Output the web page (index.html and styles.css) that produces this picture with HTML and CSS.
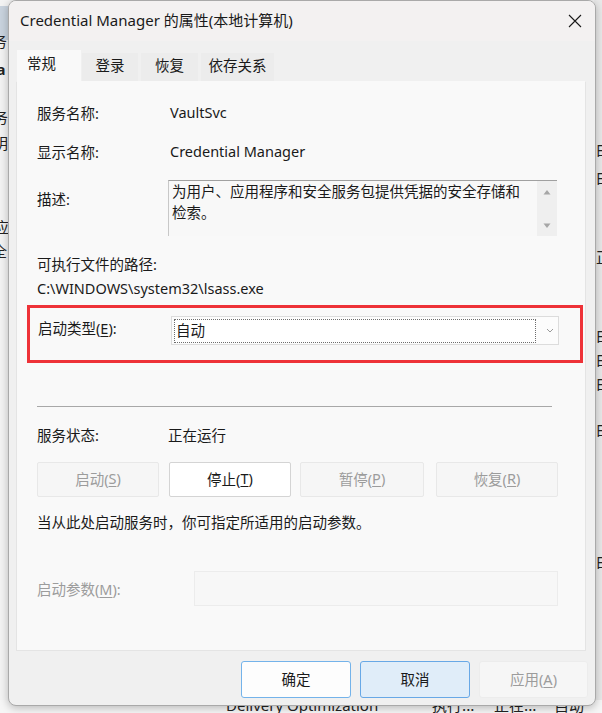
FILE: index.html
```html
<!DOCTYPE html>
<html lang="zh-CN">
<head>
<meta charset="utf-8">
<title>Credential Manager 的属性(本地计算机)</title>
<link rel="stylesheet" href="styles.css">
</head>
<body>
<div class="desktop">
  <div class="behind behind-left">
    <span class="frag f1">务</span>
    <span class="frag f2">ia</span>
    <span class="frag f3">务</span>
    <span class="frag f4">明</span>
    <span class="frag f5">应</span>
    <span class="frag f6">全</span>
  </div>
  <div class="behind behind-right">
    <span class="frag r1">由</span>
    <span class="frag r2">由</span>
    <span class="frag r3">正</span>
    <span class="frag r4">由</span>
    <span class="frag r5">由</span>
    <span class="frag r6">由</span>
    <span class="frag r7">由</span>
    <span class="frag r8">由</span>
  </div>
  <div class="behind behind-bottom">
    <span class="bfrag b1">Delivery Optimization</span>
    <span class="bfrag b2">执行...</span>
    <span class="bfrag b3">正在...</span>
    <span class="bfrag b4">自动(延</span>
  </div>

  <div class="dialog">
    <div class="titlebar">
      <span class="title">Credential Manager 的属性(本地计算机)</span>
      <svg class="close" width="14" height="14" viewBox="0 0 14 14"><path d="M1 1 L13 13 M13 1 L1 13" stroke="#1a1a1a" stroke-width="1.1" fill="none"/></svg>
    </div>
    <div class="tabs">
      <div class="tab active">常规</div>
      <div class="tab">登录</div>
      <div class="tab">恢复</div>
      <div class="tab">依存关系</div>
    </div>
    <div class="panel">
      <div class="row r-name"><span class="label">服务名称:</span><span class="value">VaultSvc</span></div>
      <div class="row r-display"><span class="label">显示名称:</span><span class="value">Credential Manager</span></div>
      <div class="row r-desc">
        <span class="label desc-label">描述:</span>
        <div class="descbox">
          <div class="desctext">为用户、应用程序和安全服务包提供凭据的安全存储和<br>检索。</div>
          <div class="vscroll">
            <svg width="8" height="6" viewBox="0 0 8 6"><path d="M4 1 L7.5 5.5 L0.5 5.5 Z" fill="#a6a6a6"/></svg>
            <svg width="8" height="6" viewBox="0 0 8 6"><path d="M0.5 0.5 L7.5 0.5 L4 5 Z" fill="#a6a6a6"/></svg>
          </div>
        </div>
      </div>
      <div class="line r-pathlabel">可执行文件的路径:</div>
      <div class="line r-path">C:\WINDOWS\system32\lsass.exe</div>
      <div class="highlight">
        <span class="label hlabel">启动类型(<u>E</u>):</span>
        <div class="combo">
          <div class="combo-field">自动</div>
          <svg class="chev" width="8" height="5" viewBox="0 0 8 5"><path d="M1 1 L4 4 L7 1" stroke="#9a9a9a" stroke-width="1" fill="none"/></svg>
        </div>
      </div>
      <div class="sep"></div>
      <div class="row r-status"><span class="label">服务状态:</span><span class="value status">正在运行</span></div>
      <div class="btnrow">
        <div class="btn disabled">启动(<u>S</u>)</div>
        <div class="btn">停止(<u>T</u>)</div>
        <div class="btn disabled">暂停(<u>P</u>)</div>
        <div class="btn disabled">恢复(<u>R</u>)</div>
      </div>
      <div class="line r-note">当从此处启动服务时，你可指定所适用的启动参数。</div>
      <div class="row r-params">
        <span class="label plabel">启动参数(<u>M</u>):</span>
        <div class="pinput"></div>
      </div>
    </div>
    <div class="footer">
      <div class="fbtn ok">确定</div>
      <div class="fbtn cancel">取消</div>
      <div class="fbtn apply">应用(<u>A</u>)</div>
    </div>
  </div>
</div>
</body>
</html>
```
FILE: styles.css
```css
* { box-sizing: border-box; }
html, body { margin: 0; padding: 0; }
body {
  width: 602px;
  height: 713px;
  overflow: hidden;
  font-family: "Noto Sans", "Noto Sans CJK SC", sans-serif;
  font-size: 14.5px;
  color: #1a1a1a;
  background: #f0f0f0;
}
.desktop { position: relative; width: 602px; height: 713px; overflow: hidden; }

.behind { position: absolute; font-family: "Noto Sans CJK SC", sans-serif; font-size: 15px; color: #222; }
.behind-left { left: 0; top: 0; width: 10px; height: 713px; background: #f3f3f3; }
.behind-left::before { content: ""; position: absolute; left: 0; top: 6px; width: 10px; height: 34px; background: #c9d3de; }
.behind-right { left: 594px; top: 0; width: 8px; height: 713px; background: #e9e9e9; }
.behind-bottom { left: 0; top: 700px; width: 602px; height: 13px; background: #f6f6f6; }
.frag { position: absolute; line-height: 18px; }
.f1 { left: -8px; top: 32px; }
.f2 { left: -8px; top: 60px; font-weight: bold; font-family: "Noto Sans", sans-serif; }
.f3 { left: -7px; top: 108px; }
.f4 { left: -7px; top: 134px; }
.f5 { left: -6px; top: 218px; }
.f6 { left: -8px; top: 242px; }
.r1 { left: 2px; top: 140px; }
.r2 { left: 2px; top: 168px; }
.r3 { left: 2px; top: 248px; }
.r4 { left: 2px; top: 326px; }
.r5 { left: 2px; top: 350px; }
.r6 { left: 2px; top: 374px; }
.r7 { left: 2px; top: 420px; }
.r8 { left: 2px; top: 552px; }
.bfrag { position: absolute; top: -4px; line-height: 18px; font-size: 15px; }
.b1 { left: 226px; font-family: "Noto Sans", sans-serif; }
.b2 { left: 432px; }
.b3 { left: 494px; }
.b4 { left: 554px; }

.dialog {
  position: absolute;
  left: 8px;
  top: 0;
  width: 588px;
  height: 706px;
  background: #f0f0f0;
  border: 1px solid #a9a9a9;
  border-radius: 8px;
  box-shadow: 0 2px 8px rgba(0,0,0,0.25);
  overflow: hidden;
  display: flex;
  flex-direction: column;
}
.titlebar {
  height: 40px;
  flex: none;
  background: #f3f1f1;
  display: flex;
  align-items: center;
  justify-content: space-between;
  padding: 0 13px 0 11px;
}
.title { font-size: 15px; color: #1a1a1a; margin-top: -4px; }
.close { margin-top: 0; }

.tabs {
  flex: none;
  height: 40px;
  display: flex;
  align-items: flex-end;
  padding-left: 8px;
  gap: 1px;
}
.tab {
  height: 28px;
  padding: 0 5px 5px;
  background: #ececec;
  display: flex;
  align-items: center;
  justify-content: center;
  font-size: 14.5px;
  color: #1a1a1a;
}
.tab:nth-child(2) { width: 56px; margin-left: 0; }
.tab:nth-child(3) { width: 57px; margin-left: 2px; }
.tab:nth-child(4) { width: 73px; margin-left: 2px; }
.tab.active {
  width: 64px;
  height: 31px;
  background: #f9f9f9;
  padding-bottom: 6px;
  justify-content: flex-start;
  padding-left: 10px;
}

.panel {
  flex: none;
  margin-left: 7px;
  width: 570px;
  height: 570px;
  background: #f9f9f9;
  border: 1px solid #e4e4e4;
  border-top-color: #f9f9f9;
  padding: 0 0 0 20px;
  display: flex;
  flex-direction: column;
}
.row { display: flex; align-items: center; height: 20px; }
.label { width: 133px; flex: none; white-space: nowrap; }
.value { white-space: nowrap; }
.line { height: 20px; line-height: 20px; white-space: nowrap; }
.r-name { margin-top: 20px; }
.r-display { margin-top: 19px; }
.r-desc { margin-top: 19px; height: 56px; align-items: flex-start; }
.desc-label { margin-top: 8px; }
.descbox {
  margin-left: -2px;
  width: 389px;
  height: 56px;
  border-top: 1px solid #a0a0a0;
  border-left: 1px solid #c8c8c8;
  background: #f8f8f8;
  display: flex;
  justify-content: space-between;
}
.desctext { padding: 0 0 0 3px; font-size: 14.5px; line-height: 21px; }
.vscroll {
  width: 20px;
  background: #efefef;
  display: flex;
  flex-direction: column;
  justify-content: space-between;
  align-items: center;
  padding: 8px 0 7px;
}
.r-pathlabel { margin-top: 18px; }
.r-path { margin-top: 4px; }

.highlight {
  margin-top: 7px;
  margin-left: -10px;
  width: 556px;
  height: 58px;
  border: 3px solid #ee3238;
  display: flex;
  align-items: flex-start;
  padding: 8px 0 0 8px;
}
.hlabel { width: 133px; height: 29px; line-height: 25px; }
.combo {
  width: 388px;
  height: 29px;
  background: #fcfcfc;
  border: 1px solid #dcdcdc;
  display: flex;
  align-items: center;
  padding: 2px;
}
.combo-field {
  width: 362px;
  height: 24px;
  border: 1px dotted #6d6d6d;
  background: #fff;
  line-height: 20px;
  padding-left: 1px;
}
.chev { margin-left: 10px; }

.sep {
  margin-top: 43px;
  width: 515px;
  height: 1px;
  background: #a8a8a8;
}
.r-status { margin-top: 17px; }
.status { margin-left: -2px; }
.btnrow { margin-top: 18px; display: flex; height: 35px; }
.btn {
  height: 35px;
  border: 1px solid #d4d4d4;
  border-radius: 2px;
  background: #ffffff;
  display: flex;
  align-items: center;
  justify-content: center;
  font-size: 14.5px;
  color: #1a1a1a;
  padding-bottom: 3px;
}
.btn.disabled { background: #f6f6f6; border-color: #e8e8e8; color: #9c9c9c; }
.btn:nth-child(1) { width: 122px; }
.btn:nth-child(2) { width: 122px; margin-left: 10px; }
.btn:nth-child(3) { width: 124px; margin-left: 9px; }
.btn:nth-child(4) { width: 122px; margin-left: 12px; }
.r-note { margin-top: 15px; }
.r-params { margin-top: 39px; height: 35px; }
.plabel { width: 157px; color: #9c9c9c; line-height: 30px; }
.pinput {
  width: 364px;
  height: 35px;
  border: 1px solid #ececec;
  background: #f7f7f7;
}

.footer {
  flex: none;
  display: flex;
  justify-content: flex-end;
  padding: 10px 7px 0 0;
  gap: 9px;
}
.fbtn {
  width: 110px;
  height: 37px;
  border-radius: 3px;
  display: flex;
  align-items: center;
  justify-content: center;
  font-size: 14.5px;
  padding-bottom: 2px;
}
.fbtn.ok { background: #fdfdfd; border: 1px solid #74b3ea; }
.fbtn.cancel { background: #e0edf9; border: 1px solid #68a8e6; }
.fbtn.apply { width: 109px; background: #f6f6f6; border: 1px solid #ececec; color: #9c9c9c; }
u { text-decoration: underline; text-underline-offset: 2px; text-decoration-thickness: 1px; }
```
